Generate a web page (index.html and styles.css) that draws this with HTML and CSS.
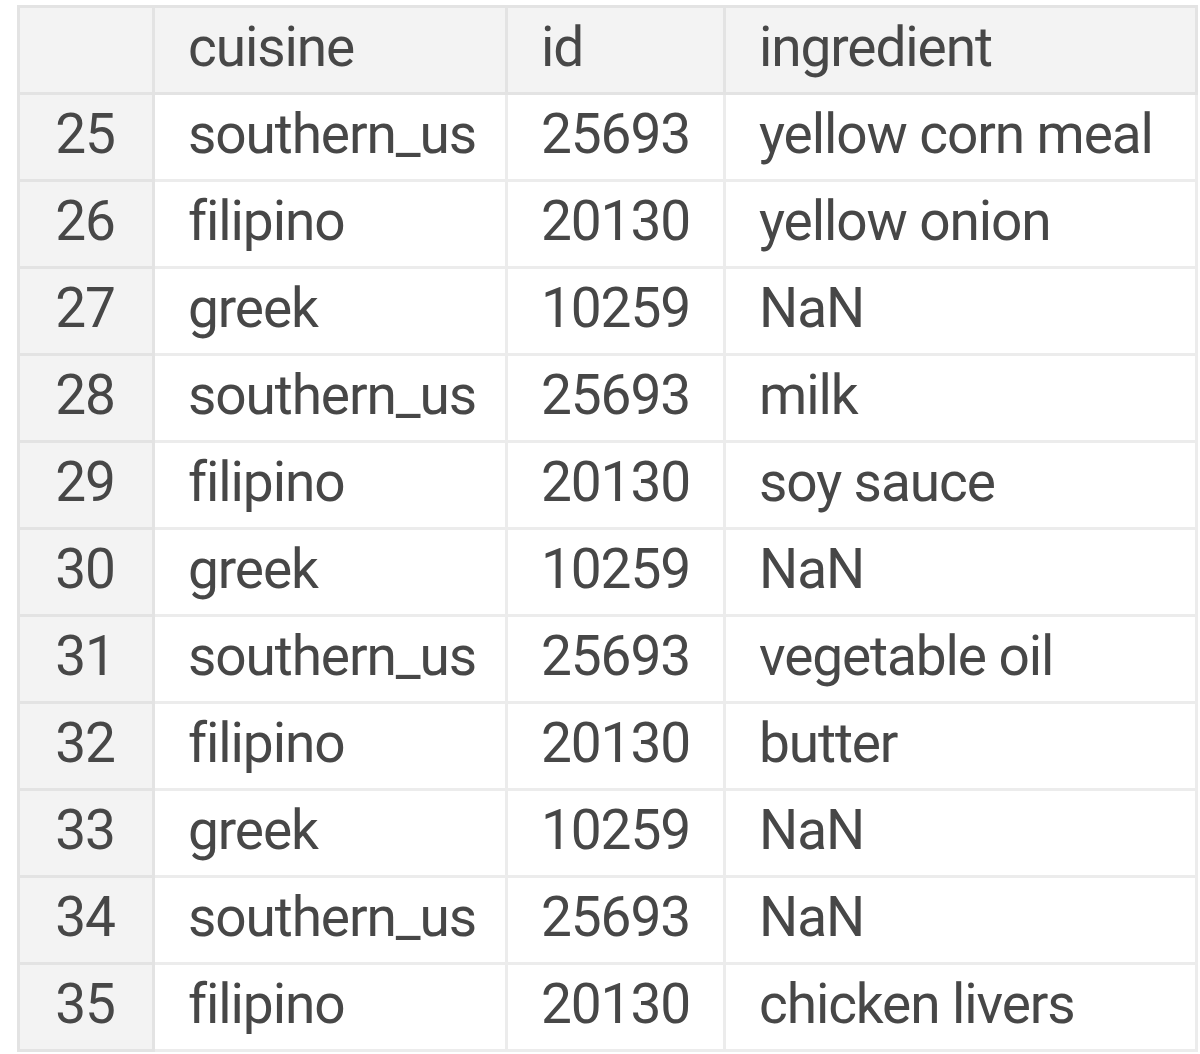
FILE: index.html
```html
<!DOCTYPE html>
<html>
<head>
<meta charset="utf-8">
<link rel="stylesheet" href="styles.css">
</head>
<body>
<table class="df">
  <colgroup>
    <col class="c-idx"><col class="c-cuisine"><col class="c-id"><col class="c-ing">
  </colgroup>
  <thead>
    <tr><th class="corner"></th><th>cuisine</th><th>id</th><th>ingredient</th></tr>
  </thead>
  <tbody>
    <tr><th>25</th><td>southern_us</td><td>25693</td><td>yellow corn meal</td></tr>
    <tr><th>26</th><td>filipino</td><td>20130</td><td>yellow onion</td></tr>
    <tr><th>27</th><td>greek</td><td>10259</td><td>NaN</td></tr>
    <tr><th>28</th><td>southern_us</td><td>25693</td><td>milk</td></tr>
    <tr><th>29</th><td>filipino</td><td>20130</td><td>soy sauce</td></tr>
    <tr><th>30</th><td>greek</td><td>10259</td><td>NaN</td></tr>
    <tr><th>31</th><td>southern_us</td><td>25693</td><td>vegetable oil</td></tr>
    <tr><th>32</th><td>filipino</td><td>20130</td><td>butter</td></tr>
    <tr><th>33</th><td>greek</td><td>10259</td><td>NaN</td></tr>
    <tr><th>34</th><td>southern_us</td><td>25693</td><td>NaN</td></tr>
    <tr><th>35</th><td>filipino</td><td>20130</td><td>chicken livers</td></tr>
  </tbody>
</table>
</body>
</html>
```
FILE: styles.css
```css
html, body {
  margin: 0;
  padding: 0;
  background: #ffffff;
}
body {
  padding: 5px 0 0 17px;
  font-family: Roboto, "Noto Sans", sans-serif;
  color: #474747;
}
.df {
  border-collapse: collapse;
  table-layout: fixed;
  width: 1178px;
  font-size: 55px;
  letter-spacing: -1.1px;
  line-height: 1;
}
.c-idx { width: 135px; }
.c-cuisine { width: 353px; }
.c-id { width: 218px; }
.c-ing { width: 472px; }
.df th, .df td {
  height: 78px;
  padding: 0 0 6px 33px;
  text-align: left;
  font-weight: 400;
  border: 3px solid #ececec;
  white-space: nowrap;
  overflow: hidden;
}
.df thead th {
  background: #f3f3f3;
  border-color: #e3e3e3;
}
.df tbody th {
  background: #f3f3f3;
  text-align: center;
  padding-left: 0;
  padding-right: 2px;
  border-color: #e3e3e3;
}
```
